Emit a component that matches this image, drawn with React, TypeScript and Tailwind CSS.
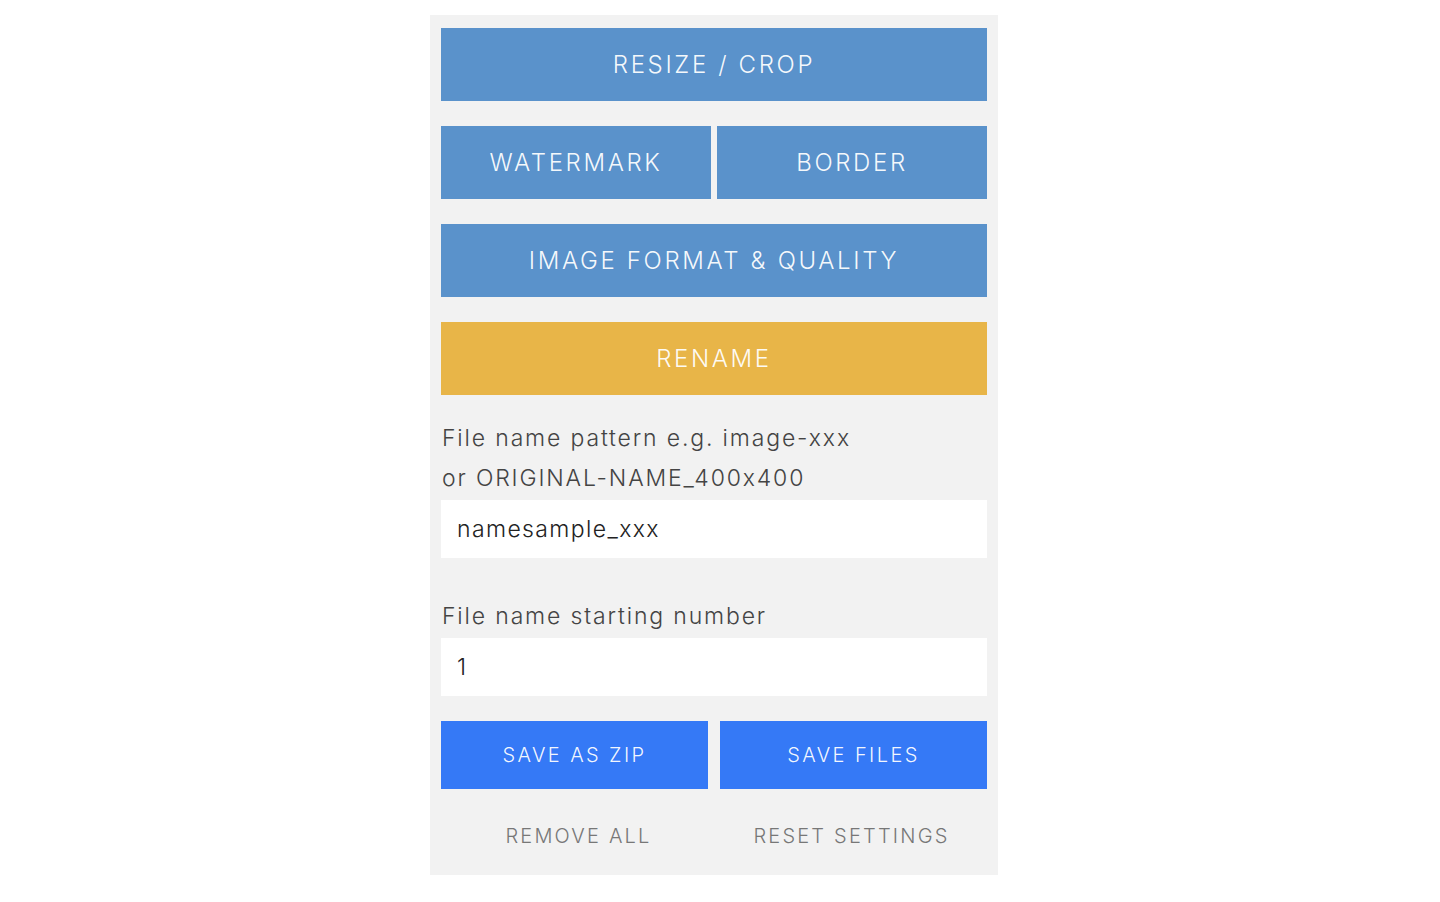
import { useState } from 'react';

const font = { fontFamily: 'Inter, "DejaVu Sans", sans-serif' };

export default function App() {
  const [pattern, setPattern] = useState('namesample_xxx');
  const [start, setStart] = useState('1');

  const toolBtn =
    'flex h-[73px] items-center justify-center bg-[#5a92cb] text-[24px] font-light uppercase tracking-[0.11em] text-white/95';
  const saveBtn =
    'flex h-[68px] items-center justify-center bg-[#3579f6] text-[20px] font-light uppercase tracking-[0.12em] text-white/95';
  const labelText =
    'block pl-[1px] text-[23px] leading-[40px] font-light tracking-[0.08em] text-[#444]';
  const inputClass =
    'mt-[2px] h-[58px] w-full bg-white px-[16px] text-[23px] font-light tracking-[0.06em] text-[#222] outline-none';

  return (
    <div className="min-h-[902px] bg-white pt-[15px]" style={font}>
      <section className="ml-[430px] w-[568px] bg-[#f2f2f2] px-[11px] pt-[13px] pb-[19px]">
        <button type="button" className={`${toolBtn} w-full`}>
          Resize / Crop
        </button>

        <div className="mt-[25px] grid grid-cols-2 gap-[6px]">
          <button type="button" className={toolBtn}>
            Watermark
          </button>
          <button type="button" className={toolBtn}>
            Border
          </button>
        </div>

        <button type="button" className={`${toolBtn} mt-[25px] w-full`}>
          Image Format &amp; Quality
        </button>

        <button
          type="button"
          className="mt-[25px] flex h-[73px] w-full items-center justify-center bg-[#e8b548] text-[24px] font-light uppercase tracking-[0.11em] text-white/95"
        >
          Rename
        </button>

        <label className="mt-[23px] block">
          <span className={labelText}>
            File name pattern e.g. image-xxx
            <br />
            or ORIGINAL-NAME_400x400
          </span>
          <input
            type="text"
            value={pattern}
            onChange={(event) => setPattern(event.target.value)}
            className={inputClass}
          />
        </label>

        <label className="mt-[38px] block">
          <span className={labelText}>File name starting number</span>
          <input
            type="text"
            value={start}
            onChange={(event) => setStart(event.target.value)}
            className={inputClass}
          />
        </label>

        <div className="mt-[25px] grid grid-cols-2 gap-[12px]">
          <button type="button" className={saveBtn}>
            Save as zip
          </button>
          <button type="button" className={saveBtn}>
            Save files
          </button>
        </div>

        <div className="mt-[27px] grid grid-cols-2 gap-[12px]">
          <button
            type="button"
            className="h-[40px] pl-[8px] text-[20px] font-light uppercase tracking-[0.11em] text-[#777]"
          >
            Remove all
          </button>
          <button
            type="button"
            className="h-[40px] pr-[4px] text-[20px] font-light uppercase tracking-[0.11em] text-[#777]"
          >
            Reset settings
          </button>
        </div>
      </section>
    </div>
  );
}
